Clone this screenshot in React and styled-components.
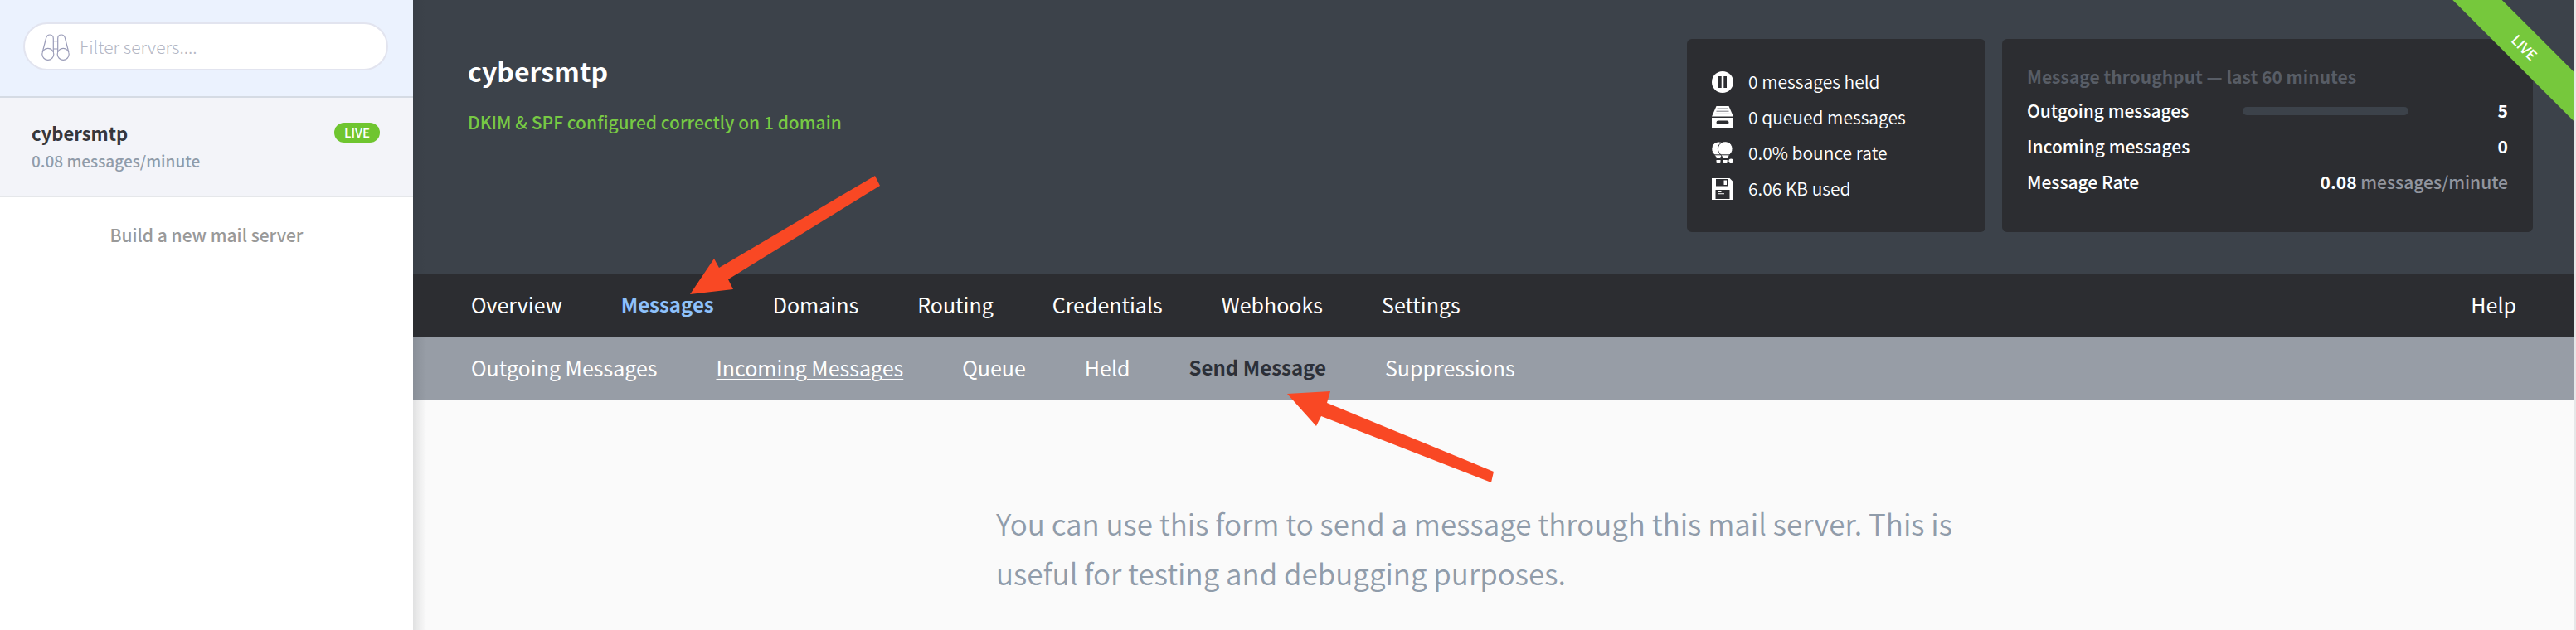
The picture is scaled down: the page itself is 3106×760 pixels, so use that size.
import React from 'react';
import styled, { createGlobalStyle } from 'styled-components';

const GlobalStyle = createGlobalStyle`
  * { box-sizing: border-box; }
  body {
    margin: 0;
    background: #fafafa;
    font-family: "Noto Sans CJK JP", "Noto Sans CJK SC", sans-serif;
    font-size: 21px;
    line-height: 30px;
  }
  h1, h2, p, ul, dl, dd { margin: 0; padding: 0; }
  ul { list-style: none; }
`;

const Page = styled.div`
  display: flex;
  min-height: 100vh;
  border-right: 2px solid #e6e7e8;
`;

const Sidebar = styled.aside`
  flex: 0 0 498px;
  background: #fff;
`;

const FilterBar = styled.div`
  padding: 27px 30px 31px 28px;
  background: #ebf2fe;
  border-bottom: 2px solid #d5dbe4;
`;

const FilterField = styled.label`
  display: flex;
  align-items: center;
  gap: 12px;
  height: 58px;
  padding: 0 20px;
  background: #fff;
  border: 2px solid #e2e4ef;
  border-radius: 30px;
`;

const FilterInput = styled.input`
  flex: 1;
  min-width: 0;
  padding: 0;
  border: 0;
  outline: 0;
  background: transparent;
  color: #3c424a;
  font-family: inherit;
  font-size: 21px;
  font-weight: 300;
  &::placeholder { color: #b4b7c4; opacity: 1; }
`;

const ServerItem = styled.a`
  display: grid;
  grid-template-columns: 1fr auto;
  align-items: center;
  row-gap: 6px;
  padding: 28px 40px 28px 38px;
  background: #f3f4f9;
  border-bottom: 2px solid #e5e7ea;
  line-height: 28px;
  text-decoration: none;
`;

const ServerName = styled.span`
  color: #36373c;
  font-size: 22px;
  font-weight: 700;
`;

const ServerRate = styled.span`
  color: #909caa;
  font-size: 19px;
  font-weight: 500;
`;

const LiveBadge = styled.span`
  height: 24px;
  padding: 0 12px;
  border-radius: 12px;
  background: #6fc530;
  color: #fff;
  font-size: 15px;
  font-weight: 500;
  line-height: 24px;
`;

const BuildLink = styled.a`
  display: block;
  margin-top: 30px;
  color: #999;
  font-weight: 500;
  text-align: center;
  text-decoration: underline;
  text-decoration-thickness: 1px;
  text-underline-offset: 3px;
`;

const Main = styled.main`
  position: relative;
  flex: 1;
  min-width: 0;
  background: #fafafa;
  &::before {
    content: "";
    position: absolute;
    inset: 0 auto 0 0;
    width: 16px;
    background: linear-gradient(90deg, rgba(40, 45, 50, 0.12), rgba(40, 45, 50, 0));
    pointer-events: none;
  }
`;

const Header = styled.header`
  display: flex;
  align-items: flex-start;
  justify-content: space-between;
  gap: 20px;
  min-height: 330px;
  padding: 47px 50px 50px 66px;
  background: #3c424a;
`;

const Heading = styled.div`
  display: grid;
  gap: 27px;
  padding-top: 18px;
`;

const Title = styled.h1`
  color: #fff;
  font-size: 32px;
  font-weight: 700;
  line-height: 40px;
`;

const DnsStatus = styled.p`
  color: #77c944;
  font-weight: 500;
`;

const Cards = styled.div`
  display: flex;
  gap: 20px;
`;

const Card = styled.section`
  width: ${(p) => (p.$wide ? 640 : 360)}px;
  min-height: 233px;
  padding: ${(p) => (p.$wide ? '25px 30px' : '30px')};
  border-radius: 6px;
  background: #2c2d31;
  color: #fff;
`;

const Stat = styled.li`
  display: flex;
  align-items: center;
  gap: 18px;
  font-weight: 350;
  line-height: 43px;
`;

const CardTitle = styled.h2`
  color: #585d66;
  font-size: 21px;
  font-weight: 700;
  line-height: 40px;
`;

const Metric = styled.div`
  display: grid;
  grid-template-columns: 260px 200px 1fr;
  align-items: center;
  line-height: 43px;
`;

const MetricLabel = styled.dt`
  font-weight: 500;
`;

const MetricBar = styled.dd`
  height: 10px;
  border-radius: 5px;
  background: #3c424a;
`;

const MetricValue = styled.dd`
  grid-column: ${(p) => (p.$span ? '2 / 4' : '3')};
  font-weight: 700;
  text-align: right;
`;

const Unit = styled.span`
  color: #92959e;
  font-weight: 500;
`;

const RibbonCorner = styled.div`
  position: absolute;
  top: 0;
  right: 0;
  width: 148px;
  height: 148px;
  overflow: hidden;
`;

const Ribbon = styled.div`
  position: absolute;
  top: 36px;
  left: -32px;
  width: 240px;
  background: #76c83c;
  color: #fff;
  font-size: 17px;
  font-weight: 500;
  line-height: 42px;
  text-align: center;
  transform: rotate(45deg);
`;

const NavBar = styled.nav`
  display: flex;
  align-items: center;
  gap: 71px;
  min-height: 76px;
  padding: 0 70px 2px;
  background: ${(p) => (p.$sub ? '#979da6' : '#2c2d31')};
`;

const NavLink = styled.a`
  margin-left: ${(p) => (p.$end ? 'auto' : 0)};
  color: ${(p) => p.$color || '#fff'};
  font-size: ${(p) => (p.$active ? 24 : 25)}px;
  font-weight: ${(p) => (p.$active ? 700 : 400)};
  white-space: nowrap;
  text-decoration: ${(p) => (p.$underlined ? 'underline' : 'none')};
  text-decoration-thickness: 1px;
  text-underline-offset: 3px;
`;

const Intro = styled.p`
  max-width: 1204px;
  margin: 0 auto;
  padding: 119px 0 40px 2px;
  color: #909caa;
  font-size: 35px;
  font-weight: 350;
  line-height: 60px;
`;

const Arrow = styled.svg`
  position: absolute;
  top: ${(p) => p.$top}px;
  left: ${(p) => p.$left}px;
  fill: #f94824;
  pointer-events: none;
`;

const Binoculars = () => (
  <svg width="34" height="34" viewBox="0 -2 34 34" fill="none" stroke="#9a9cb8" strokeWidth="1.2" aria-hidden="true">
    <circle cx="7.800" cy="24.300" r="7" />
    <circle cx="26.200" cy="24.300" r="7" />
    <path d="M1.200 22 5.300 6C6 2.600 7.500 1 10 1c2.600 0 4.300 1.700 4.300 4.500V22" />
    <path d="M32.800 22 28.700 6C28 2.600 26.500 1 24 1c-2.600 0-4.300 1.700-4.300 4.500V22" />
    <path d="M14.300 8.700h5.400M14.300 18h5.400" />
  </svg>
);

const PauseIcon = () => (
  <svg width="26" height="26" viewBox="0 0 26 26" aria-hidden="true">
    <circle cx="13" cy="13" r="13" fill="#fff" />
    <path d="M8 6h3.700v14H8zM14.300 6H18v14h-3.700z" fill="#2c2d31" />
  </svg>
);

const DrawerIcon = () => (
  <svg width="26" height="28" viewBox="0 0 26 28" aria-hidden="true">
    <path d="M5.500 0h15L26 12.500H0z" fill="#fff" />
    <path d="M6.500 3h13M5.500 6.200h15M4.300 9.400h17.400" stroke="#777880" strokeWidth="1" />
    <path d="M0 14h26v12.500q0 .5-.5.500H.500q-.5 0-.5-.5z" fill="#fff" />
    <rect x="5.500" y="17.500" width="15" height="4.500" rx="2.200" fill="#2c2d31" />
  </svg>
);

const PaddlesIcon = () => (
  <svg width="26" height="27" viewBox="0 0 26 27" aria-hidden="true">
    <g fill="#fff" stroke="#2c2d31" strokeWidth="1">
      <path d="M8.500 0C3.600 0-.2 4-.2 8.800c0 2.700 1.200 4.600 2.800 6.400 1.400 1.600 2.400 3 2.600 5.300h5.600c.2-2.300 1-3.700 2.400-5.300 1.600-1.800 3.800-3.700 3.800-6.400C17 4 13.400 0 8.500 0z" />
      <path d="M16.200-.3c-4.900 0-8.800 4-8.800 8.900 0 2.700 1.200 4.800 2.900 6.600 1.500 1.600 2.600 3 2.800 5.300h6.200c.2-2.300 1.300-3.700 2.800-5.300 1.700-1.800 2.900-3.900 2.900-6.600 0-4.900-3.900-8.900-8.800-8.900z" />
    </g>
    <path d="M0 15.800h25" stroke="#2c2d31" strokeWidth="1" />
    <path d="M5.500 22h5v3q0 1-1 1h-3q-1 0-1-1zM13.700 22h5v3q0 1-1 1h-3q-1 0-1-1z" fill="#fff" />
    <circle cx="23.200" cy="23.300" r="2.800" fill="#fff" />
  </svg>
);

const FloppyIcon = () => (
  <svg width="26" height="26" viewBox="0 0 26 26" aria-hidden="true">
    <path d="M0 0h21.500L26 4.500V26H0z" fill="#fff" />
    <path d="M5 1h14.500v8.500H5zM4.500 14h17v11h-17z" fill="#2c2d31" />
    <path d="M14.500 2.500h3.500v5.500h-3.500z" fill="#fff" />
    <path d="M7 16.500h4.500M7 18.700h8" stroke="#fff" strokeWidth="1.100" />
  </svg>
);

const stats = [
  [PauseIcon, '0 messages held'],
  [DrawerIcon, '0 queued messages'],
  [PaddlesIcon, '0.0% bounce rate'],
  [FloppyIcon, '6.06 KB used'],
];

export default function App() {
  return (
    <>
      <GlobalStyle />
      <Page>
        <Sidebar>
          <FilterBar>
            <FilterField>
              <Binoculars />
              <FilterInput type="text" placeholder="Filter servers...." aria-label="Filter servers" />
            </FilterField>
          </FilterBar>
          <ServerItem href="#cybersmtp">
            <ServerName>cybersmtp</ServerName>
            <LiveBadge>LIVE</LiveBadge>
            <ServerRate>0.08 messages/minute</ServerRate>
          </ServerItem>
          <BuildLink href="#new">Build a new mail server</BuildLink>
        </Sidebar>

        <Main>
          <Header>
            <Heading>
              <Title>cybersmtp</Title>
              <DnsStatus>DKIM &amp; SPF configured correctly on 1 domain</DnsStatus>
            </Heading>
            <Cards>
              <Card>
                <ul>
                  {stats.map(([Icon, text]) => (
                    <Stat key={text}>
                      <Icon />
                      {text}
                    </Stat>
                  ))}
                </ul>
              </Card>
              <Card $wide>
                <CardTitle>Message throughput — last 60 minutes</CardTitle>
                <dl>
                  <Metric>
                    <MetricLabel>Outgoing messages</MetricLabel>
                    <MetricBar />
                    <MetricValue>5</MetricValue>
                  </Metric>
                  <Metric>
                    <MetricLabel>Incoming messages</MetricLabel>
                    <MetricValue>0</MetricValue>
                  </Metric>
                  <Metric>
                    <MetricLabel>Message Rate</MetricLabel>
                    <MetricValue $span>
                      0.08 <Unit>messages/minute</Unit>
                    </MetricValue>
                  </Metric>
                </dl>
              </Card>
            </Cards>
          </Header>

          <NavBar aria-label="Server">
            <NavLink href="#overview">Overview</NavLink>
            <NavLink href="#messages" $active $color="#8ec1fb">Messages</NavLink>
            <NavLink href="#domains">Domains</NavLink>
            <NavLink href="#routing">Routing</NavLink>
            <NavLink href="#credentials">Credentials</NavLink>
            <NavLink href="#webhooks">Webhooks</NavLink>
            <NavLink href="#settings">Settings</NavLink>
            <NavLink href="#help" $end>Help</NavLink>
          </NavBar>
          <NavBar $sub aria-label="Messages">
            <NavLink href="#outgoing">Outgoing Messages</NavLink>
            <NavLink href="#incoming" $underlined>Incoming Messages</NavLink>
            <NavLink href="#queue">Queue</NavLink>
            <NavLink href="#held">Held</NavLink>
            <NavLink href="#send" $active $color="#2c3038">Send Message</NavLink>
            <NavLink href="#suppressions">Suppressions</NavLink>
          </NavBar>

          <Intro>
            You can use this form to send a message through this mail server. This is useful for
            testing and debugging purposes.
          </Intro>

          <RibbonCorner>
            <Ribbon>LIVE</Ribbon>
          </RibbonCorner>
          <Arrow $top={212} $left={334} width="230" height="144" viewBox="0 0 230 144" aria-hidden="true">
            <path d="M0 143 29 100 35 111 223 0 229 12 46 125 52 137z" />
          </Arrow>
          <Arrow $top={472} $left={1054} width="250" height="112" viewBox="0 0 250 112" aria-hidden="true">
            <path d="M0 3 52 0 48 14 249 97 246 110 41 30 35 42z" />
          </Arrow>
        </Main>
      </Page>
    </>
  );
}
